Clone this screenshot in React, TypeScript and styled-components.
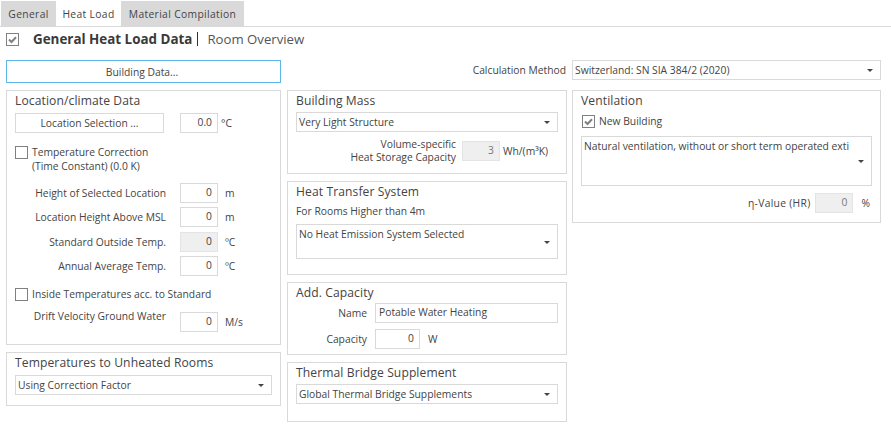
import React from "react";
import styled, { createGlobalStyle } from "styled-components";

const Global = createGlobalStyle`
  html, body { margin: 0; padding: 0; background: #fff; }
  body { font-family: "Open Sans", "Noto Sans", sans-serif; font-size: 10.3px; color: #444; width: 891px; height: 428px; overflow: hidden; }
`;

const TabBar = styled.div`
  display: flex;
  height: 25px;
  margin-top: 1px;
  padding-left: 1px;
  border-bottom: 1px solid #d9d9d9;
`;
const Tab = styled.div<{ $active?: boolean; $w: number }>`
  width: ${p => p.$w}px;
  height: 25px;
  display: flex;
  align-items: center;
  justify-content: center;
  background: ${p => (p.$active ? "#fff" : "#d9d9d9")};
  color: #444;
  letter-spacing: 0.35px;
`;
const Header = styled.div`
  display: flex;
  align-items: center;
  height: 20px;
  margin-top: 2px;
  padding-left: 6px;
`;
const HeadTitle = styled.span`
  font-weight: 700;
  font-size: 13.4px;
  color: #3a3a3a;
  margin-left: 14px;
`;
const HeadSep = styled.span`
  width: 1px;
  height: 14px;
  background: #333;
  margin: 0 9px 0 5px;
`;
const HeadSub = styled.span`
  font-size: 13.2px;
  color: #555;
`;
const Grid = styled.div`
  display: grid;
  grid-template-columns: 276px 280px 309px;
  column-gap: 5px;
  padding: 11px 0 0 6px;
`;
const TopLeft = styled.div`
  height: 30px;
  margin-right: 1px;
`;
const MethodRow = styled.div`
  grid-column: 2 / span 2;
  display: flex;
  justify-content: flex-end;
  align-items: flex-start;
  gap: 6px;
`;
const MethodLabel = styled.span`
  line-height: 20px;
`;
const Col = styled.div<{ $inset?: boolean }>`
  display: flex;
  flex-direction: column;
  gap: 7px;
  margin-right: ${p => (p.$inset ? 1 : 0)}px;
`;
const Group = styled.div<{ $h: number }>`
  box-sizing: border-box;
  height: ${p => p.$h}px;
  border: 1px solid #d9d9d9;
  padding: 1px 8px 0 8px;
  display: flex;
  flex-direction: column;
`;
const GroupTitle = styled.div`
  font-size: 12.1px;
  line-height: 17px;
  margin-bottom: 2px;
  color: #444;
  letter-spacing: 0.1px;
`;
const BuildingBtn = styled.div`
  box-sizing: border-box;
  height: 23px;
  border: 1px solid #5eb7e6;
  padding-right: 3px;
  display: flex;
  align-items: center;
  justify-content: center;
`;
const Btn = styled.div`
  box-sizing: border-box;
  width: 149px;
  height: 20px;
  margin-right: 16px;
  border: 1px solid #d9d9d9;
  display: flex;
  align-items: center;
  justify-content: center;
`;
const Row = styled.div<{ $top?: number; $end?: boolean; $indent?: number; $endPad?: number }>`
  display: flex;
  align-items: center;
  justify-content: ${p => (p.$end ? "flex-end" : "flex-start")};
  margin-top: ${p => p.$top ?? 0}px;
  padding-left: ${p => p.$indent ?? 0}px;
  padding-right: ${p => p.$endPad ?? 0}px;
`;
const Num = styled.div<{ $off?: boolean; $w?: number; $dim?: boolean }>`
  box-sizing: border-box;
  width: ${p => p.$w ?? 38}px;
  height: 20px;
  border: 1px solid ${p => (p.$off ? "#e4e4e4" : "#d9d9d9")};
  background: ${p => (p.$off ? "#efefef" : "#fff")};
  color: ${p => (p.$dim ? "#777" : "#444")};
  display: flex;
  align-items: center;
  justify-content: flex-end;
  padding: 0 5px 2px 0;
  flex: none;
`;
const Label = styled.div<{ $raise?: number }>`
  width: 151px;
  text-align: right;
  margin-right: 14px;
  white-space: nowrap;
  transform: translateY(${p => -(p.$raise ?? 0)}px);
`;
const Unit = styled.span<{ $left?: number }>`
  margin-left: ${p => p.$left ?? 7}px;
  white-space: nowrap;
`;
const Box = styled.span`
  box-sizing: border-box;
  width: 13px;
  height: 13px;
  border: 1px solid #808080;
  display: inline-flex;
  align-items: center;
  justify-content: center;
  flex: none;
  background: #fff;
`;
const CheckText = styled.span`
  margin-left: 4px;
  line-height: 13px;
`;
const Select = styled.div<{ $h?: number; $w?: number }>`
  box-sizing: border-box;
  height: ${p => p.$h ?? 20}px;
  width: ${p => (p.$w ? `${p.$w}px` : "100%")};
  border: 1px solid #d9d9d9;
  position: relative;
  padding: 1px 22px 0 2px;
  line-height: 16px;
  white-space: nowrap;
  overflow: hidden;
  flex: none;
`;
const Caret = styled.span`
  position: absolute;
  right: 7px;
  top: 50%;
  margin-top: -1px;
  width: 0;
  height: 0;
  border-left: 3px solid transparent;
  border-right: 3px solid transparent;
  border-top: 3px solid #444;
`;
const TwoLine = styled.div`
  width: 160px;
  text-align: right;
  line-height: 13px;
  margin-right: 6px;
`;
const Plain = styled.div<{ $top?: number; $indent?: number }>`
  line-height: 14px;
  margin-top: ${p => p.$top ?? 0}px;
  padding-left: ${p => p.$indent ?? 0}px;
`;
const NameLabel = styled.div`
  width: 71px;
  text-align: right;
  margin-right: 8px;
`;
const NameField = styled.div`
  box-sizing: border-box;
  flex: 1;
  height: 20px;
  border: 1px solid #d9d9d9;
  padding: 0 3px 2px 3px;
  display: flex;
  align-items: center;
`;
const EtaLabel = styled.span`
  margin-right: 5px;
  letter-spacing: 0.3px;
`;

const Check = () => (
  <svg width="11" height="11" viewBox="0 0 11 11">
    <path d="M2 5.5 L4.5 8 L9 3.2" fill="none" stroke="#808080" strokeWidth="2" />
  </svg>
);

const Dropdown = ({ children, h, w }: { children: React.ReactNode; h?: number; w?: number }) => (
  <Select $h={h} $w={w}>
    {children}
    <Caret />
  </Select>
);

const Field = ({ label, value, unit, off, top, raise }: { label: string; value: string; unit: string; off?: boolean; top: number; raise?: number }) => (
  <Row $top={top}>
    <Label $raise={raise}>{label}</Label>
    <Num $off={off}>{value}</Num>
    <Unit>{unit}</Unit>
  </Row>
);

export default function App() {
  return (
    <>
      <Global />
      <TabBar>
        <Tab $w={55}>General</Tab>
        <Tab $w={65} $active>Heat Load</Tab>
        <Tab $w={123}>Material Compilation</Tab>
      </TabBar>
      <Header>
        <Box><Check /></Box>
        <HeadTitle>General Heat Load Data</HeadTitle>
        <HeadSep />
        <HeadSub>Room Overview</HeadSub>
      </Header>
      <Grid>
        <TopLeft><BuildingBtn>Building Data...</BuildingBtn></TopLeft>
        <MethodRow>
          <MethodLabel>Calculation Method</MethodLabel>
          <Dropdown w={309}>Switzerland: SN SIA 384/2 (2020)</Dropdown>
        </MethodRow>
        <Col $inset>
          <Group $h={255}>
            <GroupTitle>Location/climate Data</GroupTitle>
            <Row $top={2}>
              <Btn>Location Selection ...</Btn>
              <Num>0.0</Num>
              <Unit $left={3}>°C</Unit>
            </Row>
            <Row $top={13}>
              <Box />
              <CheckText>Temperature Correction</CheckText>
            </Row>
            <Plain $indent={17}>(Time Constant) (0.0 K)</Plain>
            <Field top={10} label="Height of Selected Location" value="0" unit="m" />
            <Field top={4} label="Location Height Above MSL" value="0" unit="m" />
            <Field top={5} label="Standard Outside Temp." value="0" unit="ºC" off />
            <Field top={4} label="Annual Average Temp." value="0" unit="ºC" />
            <Row $top={12}>
              <Box />
              <CheckText>Inside Temperatures acc. to Standard</CheckText>
            </Row>
            <Field top={11} label="Drift Velocity Ground Water" value="0" unit="M/s" raise={6} />
          </Group>
          <Group $h={54}>
            <GroupTitle>Temperatures to Unheated Rooms</GroupTitle>
            <Row $top={2}><Dropdown>Using Correction Factor</Dropdown></Row>
          </Group>
        </Col>
        <Col>
          <Group $h={84}>
            <GroupTitle>Building Mass</GroupTitle>
            <Row $top={1}><Dropdown>Very Light Structure</Dropdown></Row>
            <Row $top={6}>
              <TwoLine>Volume-specific<br />Heat Storage Capacity</TwoLine>
              <Num $off $dim>3</Num>
              <Unit $left={3}>Wh/(m³K)</Unit>
            </Row>
          </Group>
          <Group $h={94}>
            <GroupTitle>Heat Transfer System</GroupTitle>
            <Plain $top={2}>For Rooms Higher than 4m</Plain>
            <Row $top={6}><Dropdown h={35}>No Heat Emission System Selected</Dropdown></Row>
          </Group>
          <Group $h={73}>
            <GroupTitle>Add. Capacity</GroupTitle>
            <Row>
              <NameLabel>Name</NameLabel>
              <NameField>Potable Water Heating</NameField>
            </Row>
            <Row $top={6}>
              <NameLabel>Capacity</NameLabel>
              <Num $w={45}>0</Num>
              <Unit $left={8}>W</Unit>
            </Row>
          </Group>
          <Group $h={60}>
            <GroupTitle>Thermal Bridge Supplement</GroupTitle>
            <Row $top={1}><Dropdown>Global Thermal Bridge Supplements</Dropdown></Row>
          </Group>
        </Col>
        <Col>
          <Group $h={133}>
            <GroupTitle>Ventilation</GroupTitle>
            <Row $top={4} $indent={1}>
              <Box><Check /></Box>
              <CheckText>New Building</CheckText>
            </Row>
            <Row $top={8}>
              <Dropdown h={50}>Natural ventilation, without or short term operated exti</Dropdown>
            </Row>
            <Row $top={7} $end $endPad={2}>
              <EtaLabel>η-Value (HR)</EtaLabel>
              <Num $off $dim>0</Num>
              <Unit $left={8}>%</Unit>
            </Row>
          </Group>
        </Col>
      </Grid>
    </>
  );
}
